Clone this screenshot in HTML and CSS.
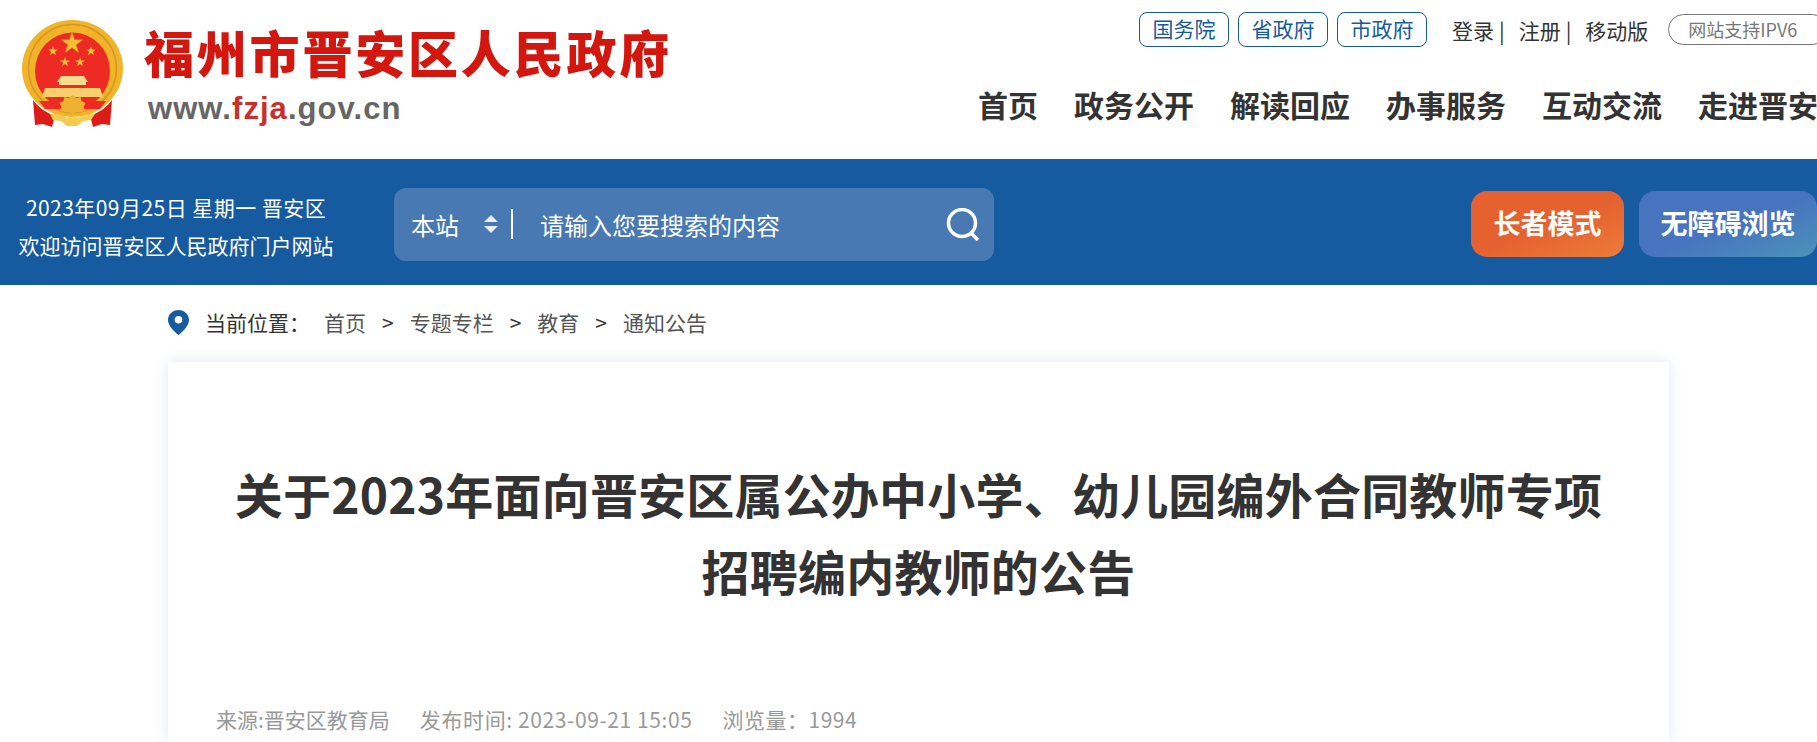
FILE: index.html
```html
<!DOCTYPE html>
<html lang="zh-CN">

<head>
    <meta charset="UTF-8">
    <meta name="viewport" content="width=device-width, initial-scale=1.0">
    <title>关于2023年面向晋安区属公办中小学、幼儿园编外合同教师专项招聘编内教师的公告</title>
    <link rel="stylesheet" href="styles.css">
</head>

<body>
    <header class="site-header">
        <a class="logo" href="#">
            <svg class="emblem" width="102" height="107" viewBox="0 0 102 107" xmlns="http://www.w3.org/2000/svg">
                <ellipse cx="50.5" cy="48.5" rx="50.5" ry="48.5" fill="#f0b429" />
                <ellipse cx="50.5" cy="48.5" rx="44" ry="44" fill="none" stroke="#d9952a" stroke-width="1.5" />
                <ellipse cx="50.5" cy="51" rx="37.5" ry="38.5" fill="#ee2a24" />
                <path d="M50 12l2.6 7.8 8.2 0-6.6 4.9 2.5 7.9-6.7-4.9-6.7 4.9 2.5-7.9-6.6-4.9 8.2 0z" fill="#f5c132" stroke="#c98a1e" stroke-width=".5" />
                <path d="M31 26l1.2 3.5 3.7 0-3 2.2 1.1 3.6-3-2.2-3 2.2 1.1-3.6-3-2.2 3.7 0z" fill="#f5c132" />
                <path d="M69 26l1.2 3.5 3.7 0-3 2.2 1.1 3.6-3-2.2-3 2.2 1.1-3.6-3-2.2 3.7 0z" fill="#f5c132" />
                <path d="M43 37l1.2 3.5 3.7 0-3 2.2 1.1 3.6-3-2.2-3 2.2 1.1-3.6-3-2.2 3.7 0z" fill="#f5c132" />
                <path d="M58 37l1.2 3.5 3.7 0-3 2.2 1.1 3.6-3-2.2-3 2.2 1.1-3.6-3-2.2 3.7 0z" fill="#f5c132" />
                <path d="M39 56h23l4 6h-2v3H37v-3h-2z" fill="#fbdc8c" />
                <path d="M20 77l3-9h55l3 9z" fill="#f8cf6c" />
                <path d="M17 81h67l-6 8H23z" fill="#ee2a24" />
                <path d="M11 80c5 7 12 12 22 16l-3 11-9-3-8 1z" fill="#dd1c18" />
                <path d="M90 80c-5 7-12 12-22 16l3 11 9-3 8 1z" fill="#dd1c18" />
                <path d="M50.5 75l4 3 4-1 1 4 4 2-2 4 2 4-6 1-7 1-7-1-6-1 2-4-2-4 4-2 1-4 4 1z" fill="#eeb02e" />
                <path d="M28 94c7-1 13 1 17 4 3-1 8-1 11 0 4-3 10-5 17-4l-4 6-8 1-6 5h-10l-6-5-8-1z" fill="#f6cb52" />
            </svg>
            <div class="logo-text">
                <div class="logo-title">福州市晋安区人民政府</div>
                <div class="logo-url">www.<span>fzja</span>.gov.cn</div>
            </div>
        </a>

        <div class="header-right">
            <div class="top-links">
                <a class="gov-link" href="#">国务院</a>
                <a class="gov-link" href="#">省政府</a>
                <a class="gov-link" href="#">市政府</a>
                <div class="user-links">
                    <a href="#">登录</a><span>|</span>
                    <a href="#">注册</a><span>|</span>
                    <a href="#">移动版</a>
                </div>
                <div class="ipv6">网站支持IPV6</div>
            </div>
            <nav class="main-nav">
                <a href="#">首页</a>
                <a href="#">政务公开</a>
                <a href="#">解读回应</a>
                <a href="#">办事服务</a>
                <a href="#">互动交流</a>
                <a href="#">走进晋安</a>
            </nav>
        </div>
    </header>

    <div class="banner">
        <div class="welcome">
            <p class="welcome-date">2023年09月25日 星期一 晋安区</p>
            <p>欢迎访问晋安区人民政府门户网站</p>
        </div>

        <div class="search">
            <span class="search-scope">本站</span>
            <span class="scope-arrows"></span>
            <span class="search-divider"></span>
            <span class="search-input">请输入您要搜索的内容</span>
            <svg class="search-icon" width="34" height="33" viewBox="0 0 34 33" fill="none" xmlns="http://www.w3.org/2000/svg">
                <circle cx="16" cy="15" r="13.5" stroke="#fff" stroke-width="3.5" />
                <path d="M25 25l7 7" stroke="#fff" stroke-width="3.5" />
            </svg>
        </div>

        <div class="mode-buttons">
            <a class="btn btn-elder" href="#">长者模式</a>
            <a class="btn btn-access" href="#">无障碍浏览</a>
        </div>
    </div>

    <main class="content">
        <div class="crumbs">
            <svg class="pin" width="21" height="25" viewBox="0 0 21 25" xmlns="http://www.w3.org/2000/svg">
                <path fill-rule="evenodd" d="M10.500 0C16.300 0 21 4.400 21 10c0 5.500-5.500 11-10.500 15C5.500 21 0 15.500 0 10 0 4.400 4.700 0 10.500 0zm0 6a3.800 3.800 0 1 0 0 7.600 3.800 3.800 0 0 0 0-7.600z" fill="#165a9f" />
            </svg>
            <span class="crumbs-label">当前位置：</span>
            <a href="#">首页</a><i>&gt;</i>
            <a href="#">专题专栏</a><i>&gt;</i>
            <a href="#">教育</a><i>&gt;</i>
            <a href="#">通知公告</a>
        </div>

        <article class="article">
            <h1>关于2023年面向晋安区属公办中小学、幼儿园编外合同教师专项招聘编内教师的公告</h1>
            <div class="meta">
                <span>来源:晋安区教育局</span>
                <span class="meta-time">发布时间: 2023-09-21 15:05</span>
                <span class="meta-views">浏览量：1994</span>
            </div>
        </article>
    </main>
</body>

</html>
```

FILE: styles.css
```css
* {
    margin: 0;
    padding: 0;
    box-sizing: border-box;
    font-family: "Noto Sans CJK SC", "Noto Sans", sans-serif;
}

html,
body {
    height: 100%;
    overflow: hidden;
}

body {
    background-color: #fff;
    color: #333;
}

a {
    color: inherit;
    text-decoration: none;
}

/* Header */
.site-header {
    display: flex;
    height: 159px;
}

.logo {
    display: flex;
    width: 978px;
    flex-shrink: 0;
    padding: 20px 0 0 22px;
}

.logo-text {
    margin-left: 20px;
}

.logo-title {
    margin-top: 1px;
    font-size: 50px;
    font-weight: 900;
    line-height: 60px;
    letter-spacing: 2.8px;
    color: #d3170f;
    white-space: nowrap;
}

.logo-url {
    margin: 10px 0 0 4px;
    font-family: "Liberation Sans", sans-serif;
    font-size: 31px;
    font-weight: 700;
    line-height: 36px;
    letter-spacing: 1.05px;
    color: #666;
}

.logo-url span {
    font-family: inherit;
    color: #c9302c;
}

.header-right {
    flex: 1;
    min-width: 0;
}

.top-links {
    display: flex;
    align-items: center;
    margin: 12px 0 0 161px;
    height: 35px;
    white-space: nowrap;
}

.gov-link {
    flex-shrink: 0;
    width: 90px;
    height: 35px;
    margin-right: 9px;
    border: 1px solid #165a9f;
    border-radius: 8px;
    font-size: 21px;
    line-height: 31px;
    text-align: center;
    color: #165a9f;
}

.user-links {
    display: flex;
    flex-shrink: 0;
    gap: 5px;
    margin-left: 16px;
    font-size: 21px;
    line-height: 30px;
    color: #333;
}

.user-links span {
    margin-right: 9px;
}

.ipv6 {
    flex-shrink: 0;
    width: 160px;
    height: 31px;
    margin-left: 20px;
    padding-left: 19px;
    border: 1px solid #777;
    border-radius: 16px;
    font-size: 18px;
    line-height: 29px;
    color: #777;
}

.main-nav {
    display: flex;
    gap: 36px;
    margin-top: 35px;
    font-size: 30px;
    font-weight: 700;
    line-height: 44px;
    color: #333;
    white-space: nowrap;
}

/* Blue band */
.banner {
    display: flex;
    align-items: center;
    height: 126px;
    background-color: #165a9f;
    color: #fff;
}

.welcome {
    width: 352px;
    margin-right: 42px;
    flex-shrink: 0;
    padding-top: 7px;
    font-size: 21px;
    line-height: 38px;
    text-align: center;
    white-space: nowrap;
}

.welcome-date {
    letter-spacing: 0.45px;
}

.search {
    display: flex;
    align-items: center;
    width: 600px;
    height: 73px;
    margin-top: 4px;
    padding: 0 14px 0 17px;
    background-color: #4879b3;
    border-radius: 12px;
    font-size: 24px;
}

.scope-arrows {
    position: relative;
    width: 14px;
    height: 20px;
    margin-left: 25px;
}

.scope-arrows::before,
.scope-arrows::after {
    content: "";
    position: absolute;
    left: 0;
    border-left: 7px solid transparent;
    border-right: 7px solid transparent;
}

.scope-arrows::before {
    top: 1px;
    border-bottom: 7px solid #e6edf5;
}

.scope-arrows::after {
    bottom: 1px;
    border-top: 7px solid #e6edf5;
}

.search-divider {
    width: 2px;
    height: 30px;
    margin: 0 27px 0 13px;
    background-color: #fff;
}

.search-input {
    flex: 1;
}

.mode-buttons {
    display: flex;
    gap: 15px;
    margin-left: auto;
    margin-top: 4px;
}

.btn {
    display: block;
    height: 66px;
    border-radius: 16px;
    font-size: 27px;
    font-weight: 700;
    line-height: 64px;
    text-align: center;
    color: #fff;
}

.btn-elder {
    width: 153px;
    background: linear-gradient(160deg, #e66130 50%, #ec7c38);
}

.btn-access {
    width: 178px;
    background: linear-gradient(160deg, #4773bf 50%, #4b93b9);
}

/* Breadcrumbs and article */
.content {
    width: 1501px;
    margin-left: 168px;
}

.crumbs {
    display: flex;
    align-items: center;
    height: 77px;
    padding-bottom: 4px;
    font-size: 21px;
    color: #555;
}

.pin {
    margin: 2px 16px 0 0;
}

.crumbs-label {
    width: 119px;
    color: #333;
}

.crumbs i {
    margin: 0 16px;
    font-style: normal;
    color: #333;
}

.article {
    height: 380px;
    padding: 93px 48px 0;
    background-color: #fff;
    box-shadow: 0 0 12px rgba(90, 110, 170, 0.18);
}

.article h1 {
    font-size: 48px;
    font-weight: 700;
    line-height: 77px;
    letter-spacing: 0.2px;
    text-align: center;
    color: #333;
}

.meta {
    display: flex;
    gap: 30px;
    margin-top: 95px;
    font-size: 21px;
    color: #999;
}

.meta-time {
    letter-spacing: 0.6px;
}

.meta-views {
    letter-spacing: 0.5px;
}
```
